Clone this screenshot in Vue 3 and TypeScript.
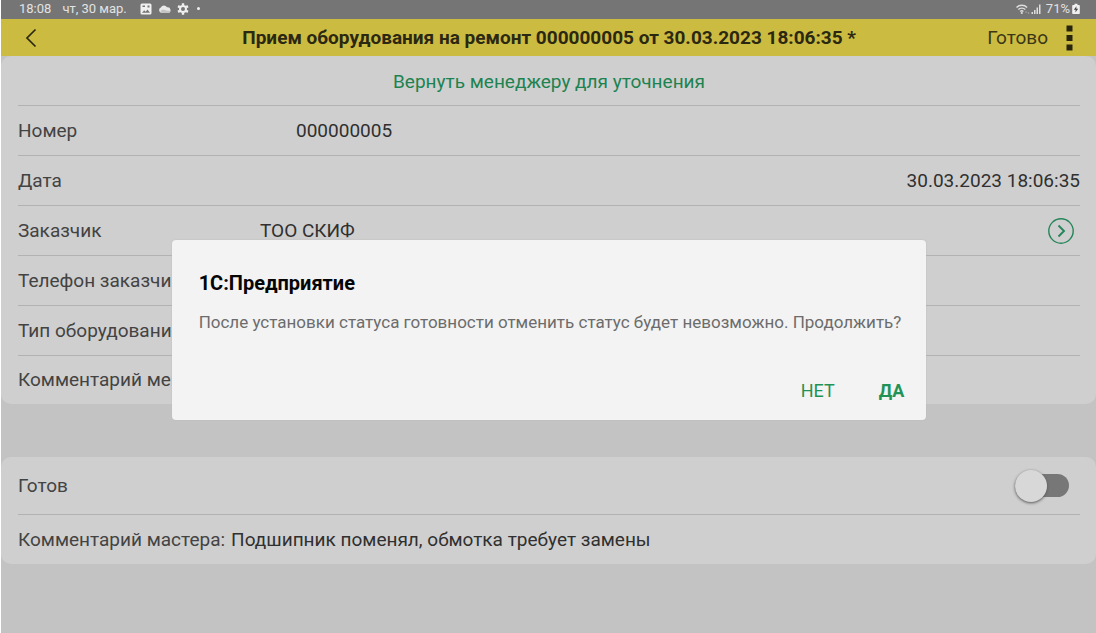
<script setup lang="ts">
import { ref } from 'vue'

interface Field {
  id: string
  label: string
  value: string
  kind: 'wide' | 'middle' | 'end'
  open?: boolean
}

const fields = ref<Field[]>([
  { id: 'number', label: 'Номер', value: '000000005', kind: 'wide' },
  { id: 'date', label: 'Дата', value: '30.03.2023 18:06:35', kind: 'end' },
  { id: 'customer', label: 'Заказчик', value: 'ТОО СКИФ', kind: 'middle', open: true },
  { id: 'phone', label: 'Телефон заказчика', value: '', kind: 'middle' },
  { id: 'type', label: 'Тип оборудования', value: '', kind: 'middle' },
  { id: 'manager', label: 'Комментарий менеджера', value: '', kind: 'middle' },
])
const done = ref(false)
const comment = ref('Подшипник поменял, обмотка требует замены')
const asking = ref(true)

function answer(yes: boolean) {
  if (yes) done.value = true
  asking.value = false
}
</script>

<template>
  <div class="screen">
    <div class="status">
      <span>18:08</span>
      <span class="day">чт, 30 мар.</span>
      <svg class="glyph" width="12" height="12" viewBox="0 0 12 12">
        <path fill="#f0f0f0" fill-rule="evenodd" d="M2 .5h8A1.500 1.500 0 0 1 11.500 2v8a1.500 1.500 0 0 1-1.500 1.500H2A1.500 1.500 0 0 1 .5 10V2A1.500 1.500 0 0 1 2 .5ZM2 9.800h8L7.500 6.500 5.700 8.700 4.200 7.200ZM2.500 2.500v1.500H5V2.500ZM7.500 2.500v2h2v-2Z" />
      </svg>
      <svg class="glyph" width="13" height="12" viewBox="0 0 13 12">
        <path fill="#e8e8e8" d="M3.300 10A3 3 0 0 1 2.800 4.400 3.500 3.500 0 0 1 9 4.300 2.900 2.900 0 0 1 10.200 10Z" />
        <path fill="#c4c4c4" d="M3 10a2.400 2.400 0 0 1 1-3.200c2-.5 3 .2 4.500.8S12 7.600 12.500 8.300c-.3 1.100-1.200 1.700-2.300 1.700Z" />
      </svg>
      <svg class="glyph" width="12" height="12" viewBox="0 0 12 12">
        <g fill="none" stroke="#f0f0f0">
          <circle cx="6" cy="6" r="3" stroke-width="2" />
          <path stroke-width="2.400" d="M6 .3v2M6 9.700v2M1.060 3.150l1.740 1M9.200 7.850l1.740 1M1.060 8.850l1.740-1M9.200 4.150l1.740-1" />
        </g>
      </svg>
      <span class="dot"></span>
      <span class="space"></span>
      <svg width="14" height="12" viewBox="0 0 14 12">
        <g fill="none" stroke="#dedede" stroke-width="1.400">
          <path d="M.5 4.500a7.300 7.300 0 0 1 10.600 0M2.300 6.600a4.900 4.900 0 0 1 7 0M4.200 8.600a2.300 2.300 0 0 1 3.200 0" />
        </g>
        <circle cx="5.800" cy="10" r="1.100" fill="#dedede" />
        <path fill="#b5b5b5" d="M9 9.500l1-1.500L11 9.500ZM11.500 9.500h2l-1 1.500Z" />
      </svg>
      <svg class="signal" width="11" height="12" viewBox="0 0 11 12">
        <path fill="#dedede" d="M.5 9h1.500v2H.5ZM3 7h1.500v4H3ZM5.500 4.500H7V11H5.500ZM8 1.500h1.500V11H8Z" />
      </svg>
      <span class="charge">71%</span>
      <svg width="8" height="12" viewBox="0 0 8 12">
        <path fill="#f0f0f0" d="M2.500.7h3V2H7a.8.8 0 0 1 .8.800v7.400a.8.800 0 0 1-.8.800H1a.8.800 0 0 1-.8-.8V2.800A.8.800 0 0 1 1 2h1.500Z" />
        <path fill="#444" d="M4.500 3.200 1.800 6.800h1.900l-.4 2.700 2.900-3.700H4.300Z" />
      </svg>
    </div>

    <header class="bar">
      <button class="back" aria-label="Назад">
        <svg width="12" height="20" viewBox="0 0 12 20">
          <path d="M10.500 1.500 2 10l8.500 8.500" fill="none" stroke="#2b2811" stroke-width="1.700" />
        </svg>
      </button>
      <h1>Прием оборудования на ремонт 000000005 от 30.03.2023 18:06:35 *</h1>
      <button class="ready">Готово</button>
      <button class="more" aria-label="Ещё">
        <svg width="7" height="26" viewBox="0 0 7 26">
          <path fill="#28250f" d="M.5.500h6v6h-6ZM.5 10h6v6h-6ZM.5 19.500h6v6h-6Z" />
        </svg>
      </button>
    </header>

    <main>
      <section class="card">
        <button class="return">Вернуть менеджеру для уточнения</button>
        <div v-for="f in fields" :key="f.id" class="row" :class="f.kind">
          <label :for="f.id">{{ f.label }}</label>
          <input :id="f.id" v-model="f.value" type="text" />
          <button v-if="f.open" class="open" aria-label="Открыть">
            <svg width="26" height="26" viewBox="0 0 26 26">
              <g fill="none" stroke="#26855a">
                <circle cx="13" cy="13" r="12.200" stroke-width="1.400" />
                <path d="m10.500 7.500 5.500 5.500-5.500 5.500" stroke-width="1.900" />
              </g>
            </svg>
          </button>
        </div>
      </section>

      <section class="card">
        <div class="row tall">
          <label for="done">Готов</label>
          <input id="done" v-model="done" class="switch" type="checkbox" role="switch" />
        </div>
        <div class="row comment">
          <label for="comment">Комментарий мастера:</label>
          <input id="comment" v-model="comment" type="text" />
        </div>
      </section>
    </main>

    <div v-if="asking" class="overlay">
      <div class="dialog" role="dialog" aria-modal="true" aria-labelledby="ask-title">
        <h2 id="ask-title">1С:Предприятие</h2>
        <p>После установки статуса готовности отменить статус будет невозможно. Продолжить?</p>
        <div class="actions">
          <button @click="answer(false)">НЕТ</button>
          <button class="yes" @click="answer(true)">ДА</button>
        </div>
      </div>
    </div>
  </div>
</template>

<style>
body {
  margin: 0;
}
</style>

<style scoped>
.screen {
  box-sizing: border-box;
  min-height: 100vh;
  border-left: 1px solid #fff;
  background: #c3c3c3;
  color: #434343;
  font: 19px/24px Roboto, "Noto Sans", sans-serif;
}
button,
input {
  margin: 0;
  padding: 0;
  border: 0;
  background: none;
  color: inherit;
  font: inherit;
}
button {
  cursor: pointer;
}
svg {
  display: block;
  flex: none;
}

.status {
  display: flex;
  align-items: center;
  height: 19px;
  padding: 0 16px 2px 18px;
  box-sizing: border-box;
  background: #757575;
  color: #e2e2e2;
  font-size: 13px;
  line-height: 16px;
}
.day {
  margin: 0 13px 0 11px;
}
.glyph {
  margin-right: 6px;
}
.dot {
  width: 3px;
  height: 3px;
  margin-left: 2px;
  border-radius: 50%;
  background: #f0f0f0;
}
.space {
  flex: 1;
}
.signal {
  margin-left: 1px;
}
.charge {
  margin: 0 2px 0 0;
}
.signal + .charge {
  margin-left: 4px;
}

.bar {
  display: flex;
  align-items: center;
  height: 37px;
  padding: 0 23px 0 24px;
  background: #ccbb41;
  color: #2b2811;
}
.back {
  width: 86px;
}
h1 {
  flex: 1;
  margin: 0;
  font-size: 19px;
  font-weight: 700;
  line-height: 24px;
  text-align: center;
  white-space: nowrap;
}
.ready {
  color: #3a3616;
}
.more {
  margin-left: 18px;
}

main {
  display: flex;
  flex-direction: column;
  gap: 53px;
}
.card {
  padding: 0 16px 0 17px;
  border-radius: 10px;
  background: #cfcfcf;
}
.return {
  display: block;
  width: 100%;
  height: 49px;
  padding-top: 2px;
  color: #1d8350;
}
.row {
  display: flex;
  align-items: center;
  height: 49px;
  border-top: 1px solid #b2b2b2;
}
.row:last-child {
  height: 48px;
}
.row label {
  white-space: nowrap;
}
.row input[type="text"] {
  flex: 1;
  min-width: 0;
  color: #303030;
}
.wide label {
  width: 278px;
}
.middle label {
  width: 242px;
}
.end input[type="text"] {
  text-align: right;
}
.open {
  margin-right: 6px;
}
.row.tall {
  height: 57px;
  border-top: 0;
  justify-content: space-between;
}
.row.comment {
  height: 49px;
  gap: 6px;
}
.switch {
  appearance: none;
  display: flex;
  align-items: center;
  width: 54px;
  height: 23px;
  margin-right: 11px;
  border-radius: 12px;
  background: linear-gradient(90deg, transparent 16px, #777 16px);
}
.switch::before {
  content: "";
  width: 32px;
  height: 32px;
  flex: none;
  border-radius: 50%;
  background: #d8d8d8;
  box-shadow: 0 1px 3px #555;
}
.switch:checked {
  justify-content: flex-end;
  background: #26855a;
}

.overlay {
  position: absolute;
  inset: 0;
  display: flex;
  align-items: center;
  justify-content: center;
  padding: 27px 16px 0 18px;
}
.overlay,
.dialog {
  box-sizing: border-box;
}
.dialog {
  max-width: 100%;
  padding: 30px 22px 16px 27px;
  border-radius: 4px;
  background: #f3f3f3;
  box-shadow: 0 0 2px #bbb;
}
h2 {
  margin: 0;
  color: #050505;
  font-size: 20px;
  font-weight: 700;
  line-height: 26px;
}
p {
  margin: 14px 3px 44px 0;
  color: #6c6c6c;
  font-size: 17px;
  line-height: 24px;
}
.actions {
  display: flex;
  justify-content: flex-end;
  gap: 44px;
  color: #1f9356;
  font-size: 18px;
  line-height: 26px;
}
.yes {
  font-weight: 700;
}
</style>
